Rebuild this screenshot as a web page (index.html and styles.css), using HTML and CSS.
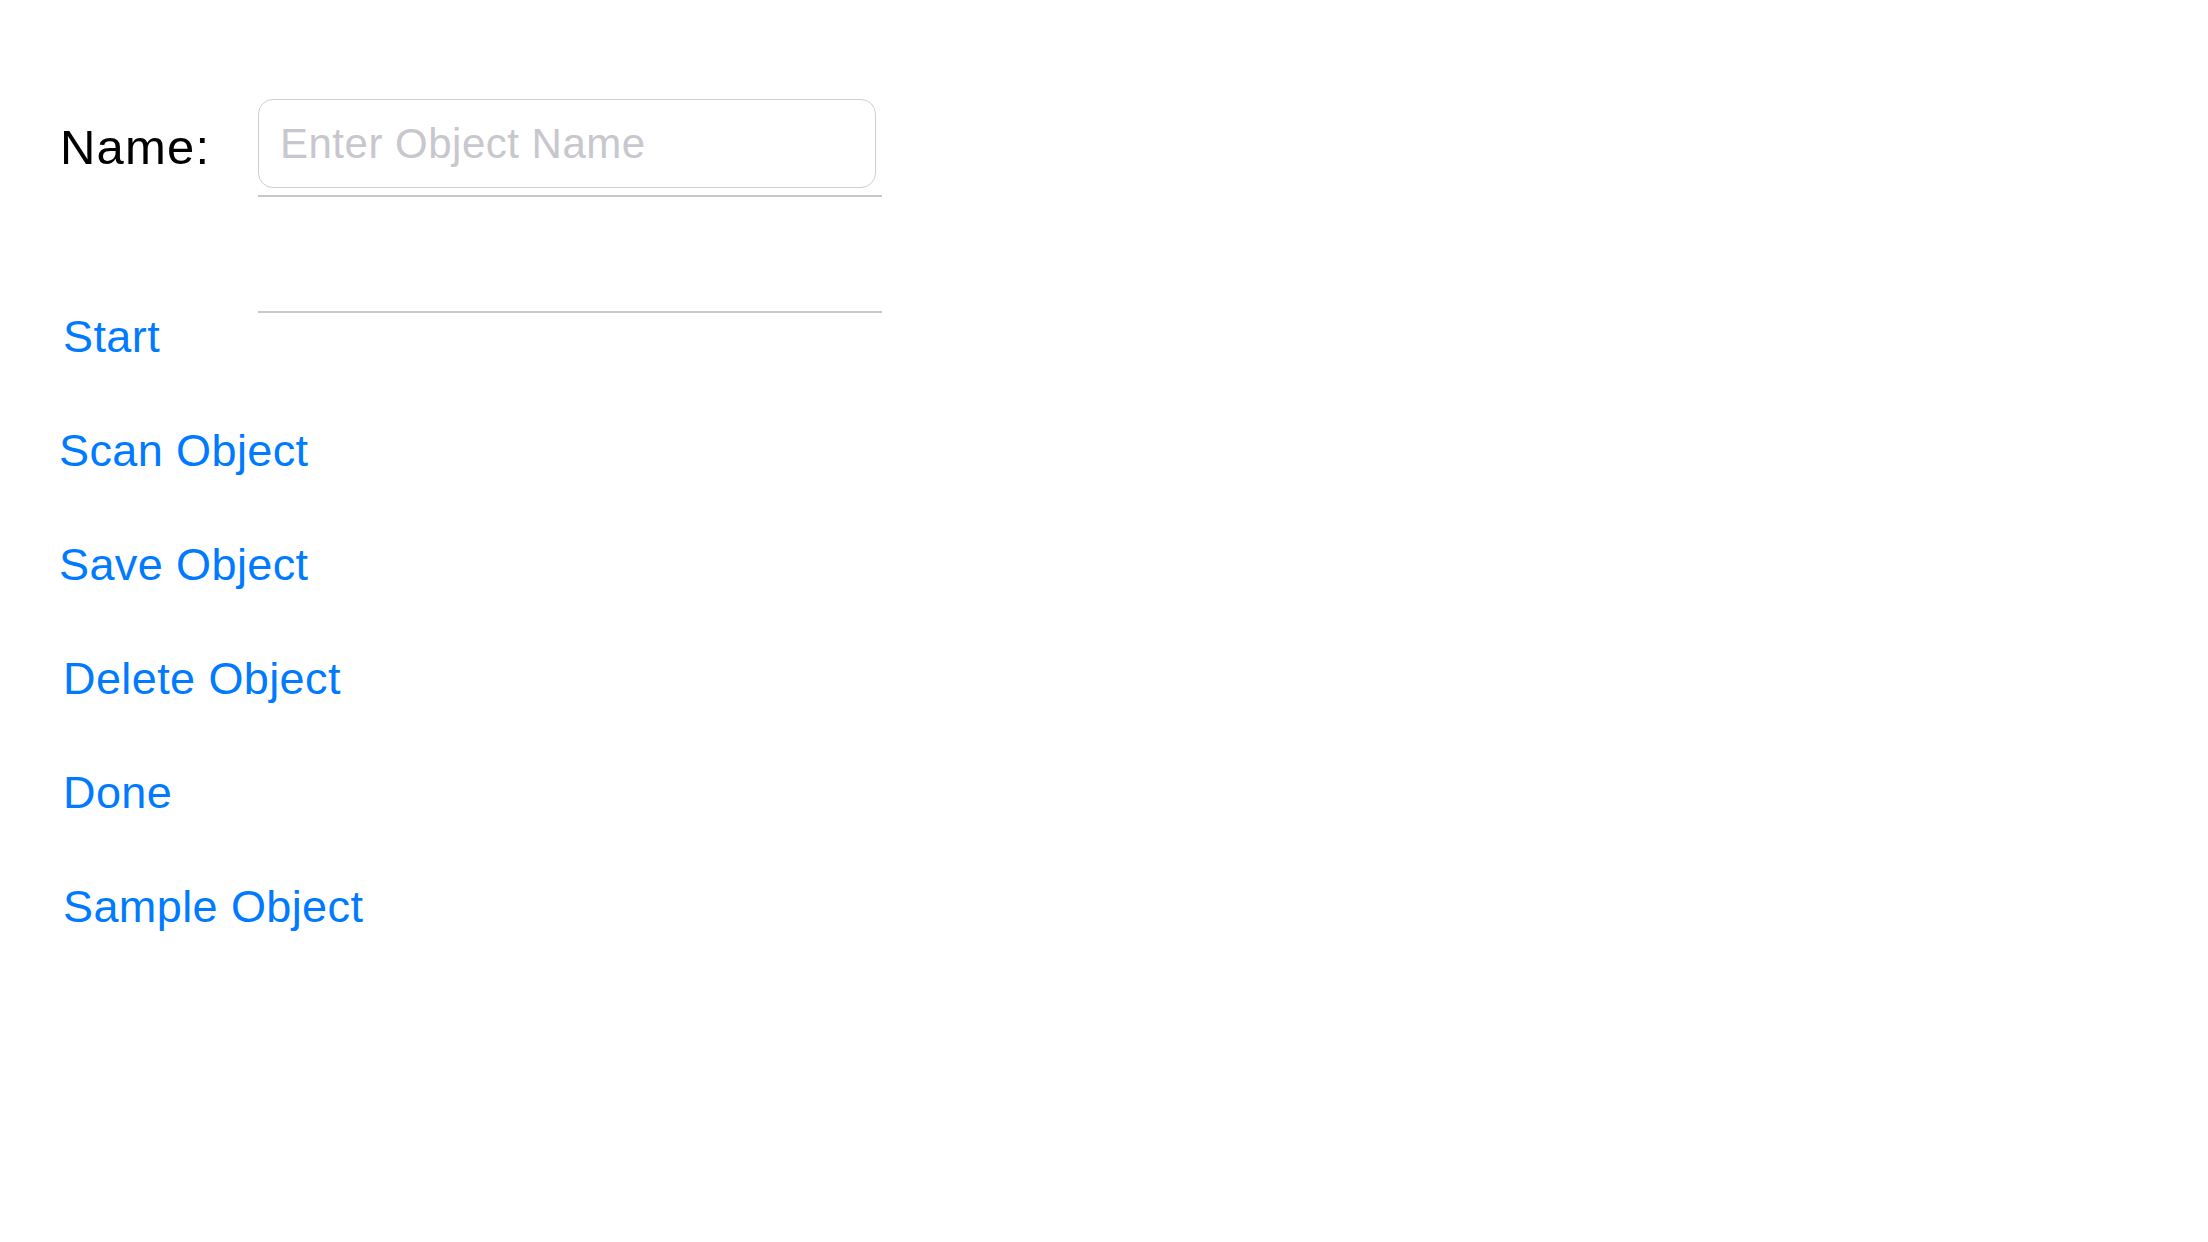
FILE: index.html
```html
<!DOCTYPE html>
<html lang="en">
<head>
<meta charset="utf-8">
<title>Object Scanner</title>
<link rel="stylesheet" href="styles.css">
</head>
<body>
<main class="screen">
  <div class="name-row">
    <label class="name-label" for="objName">Name:</label>
    <div class="field-col">
      <input id="objName" class="name-input" type="text" placeholder="Enter Object Name">
      <div class="rule rule-top"></div>
      <div class="rule rule-bottom"></div>
    </div>
  </div>
  <div class="actions">
    <button class="action">Start</button>
    <button class="action action-tight">Scan Object</button>
    <button class="action action-tight">Save Object</button>
    <button class="action">Delete Object</button>
    <button class="action">Done</button>
    <button class="action">Sample Object</button>
  </div>
</main>
</body>
</html>
```

FILE: styles.css
```css
html, body {
  margin: 0;
  padding: 0;
  background: #ffffff;
}

body {
  width: 2208px;
  height: 1242px;
  overflow: hidden;
  font-family: "Liberation Sans", Arial, sans-serif;
}

.screen {
  padding: 99px 0 0 60px;
  display: flex;
  flex-direction: column;
}

.name-row {
  display: flex;
  align-items: flex-start;
}

.name-label {
  width: 198px;
  padding-top: 20px;
  font-size: 49px;
  line-height: 56px;
  letter-spacing: 1.2px;
  color: #000000;
}

.field-col {
  display: flex;
  flex-direction: column;
  width: 624px;
}

.name-input {
  box-sizing: border-box;
  width: 618px;
  height: 89px;
  margin: 0;
  padding: 0 21px;
  border: 1px solid #cfcfd3;
  border-radius: 15px;
  background: #ffffff;
  font-family: "Liberation Sans", Arial, sans-serif;
  font-size: 42px;
  letter-spacing: 0.5px;
  color: #000000;
  outline: none;
}

.name-input::placeholder {
  color: #c7c7cd;
}

.rule {
  height: 2px;
  background: #c8c8cc;
}

.rule-top {
  margin-top: 7px;
}

.rule-bottom {
  margin-top: 114px;
}

.actions {
  display: flex;
  flex-direction: column;
  align-items: flex-start;
  gap: 67px;
  padding-left: 3px;
}

.action {
  margin: 0;
  padding: 0;
  border: 0;
  background: none;
  font-family: "Liberation Sans", Arial, sans-serif;
  font-size: 45px;
  line-height: 47px;
  letter-spacing: 0.4px;
  color: #007aff;
  cursor: pointer;
}

.action-tight {
  margin-left: -4px;
}
```
